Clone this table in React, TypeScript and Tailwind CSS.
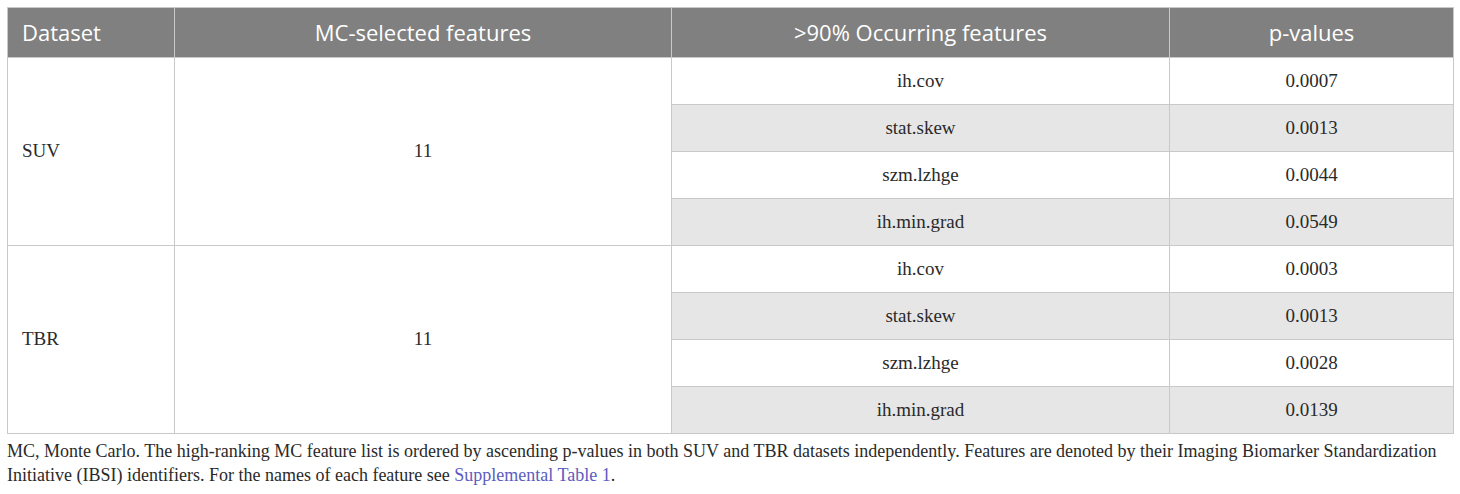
import React from "react";

const groups = [
  {
    name: "SUV",
    count: "11",
    rows: [
      ["ih.cov", "0.0007"],
      ["stat.skew", "0.0013"],
      ["szm.lzhge", "0.0044"],
      ["ih.min.grad", "0.0549"],
    ],
  },
  {
    name: "TBR",
    count: "11",
    rows: [
      ["ih.cov", "0.0003"],
      ["stat.skew", "0.0013"],
      ["szm.lzhge", "0.0028"],
      ["ih.min.grad", "0.0139"],
    ],
  },
];

const serif = "font-['Liberation_Serif',serif]";

export default function App() {
  return (
    <div className="bg-white w-[1460px] h-[494px] pl-[7px] pr-[7px] pt-[7px]">
      <table className="w-[1446px] border-collapse table-fixed border border-[#c9c9c9]">
        <colgroup>
          <col className="w-[167px]" />
          <col className="w-[497px]" />
          <col className="w-[498px]" />
          <col className="w-[284px]" />
        </colgroup>
        <thead>
          <tr className="bg-[#808080] text-white font-['Open_Sans',sans-serif] text-[22px] h-[50px]">
            <th className="font-normal text-left pl-[14px] border border-[#c9c9c9]">Dataset</th>
            <th className="font-normal text-center border border-[#c9c9c9]">MC-selected features</th>
            <th className="font-normal text-center border border-[#c9c9c9]">&gt;90% Occurring features</th>
            <th className="font-normal text-center border border-[#c9c9c9]">p-values</th>
          </tr>
        </thead>
        <tbody className={`${serif} text-[19px] text-[#2a2a2a]`}>
          {groups.map((g) =>
            g.rows.map((r, i) => (
              <tr key={g.name + i} className="h-[47px]">
                {i === 0 && (
                  <>
                    <td rowSpan={4} className="border border-[#c9c9c9] pl-[14px] bg-white">
                      {g.name}
                    </td>
                    <td rowSpan={4} className="border border-[#c9c9c9] text-center bg-white">
                      {g.count}
                    </td>
                  </>
                )}
                <td className={`border border-[#c9c9c9] text-center ${i % 2 === 1 ? "bg-[#e6e6e6]" : "bg-white"}`}>
                  {r[0]}
                </td>
                <td className={`border border-[#c9c9c9] text-center ${i % 2 === 1 ? "bg-[#e6e6e6]" : "bg-white"}`}>
                  {r[1]}
                </td>
              </tr>
            ))
          )}
        </tbody>
      </table>
      <p className={`${serif} text-[18px] leading-[24px] text-[#2a2a2a] mt-[5px]`}>
        MC, Monte Carlo. The high-ranking MC feature list is ordered by ascending p-values in both SUV and TBR datasets independently. Features are denoted by their Imaging Biomarker Standardization Initiative (IBSI) identifiers. For the names of each feature see{" "}
        <span className="text-[#5c5cc0]">Supplemental Table 1</span>.
      </p>
    </div>
  );
}
